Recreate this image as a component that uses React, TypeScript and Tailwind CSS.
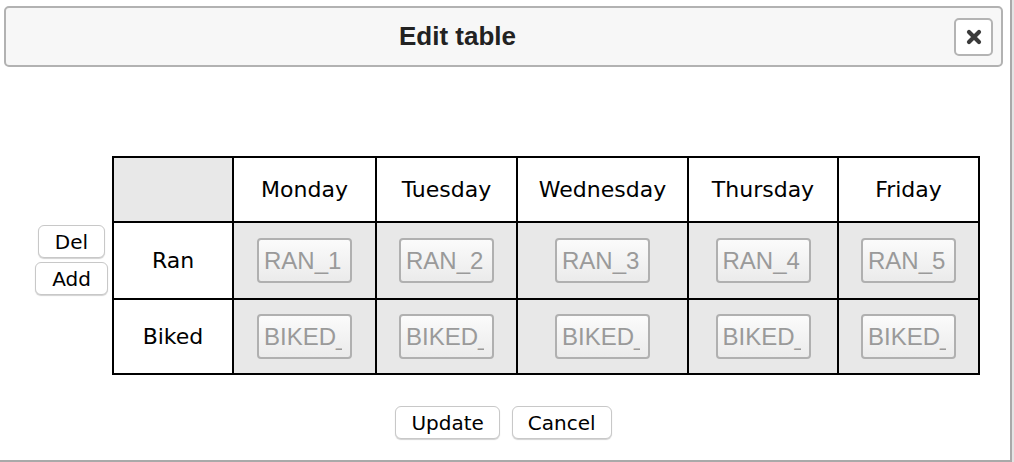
const days = ["Monday", "Tuesday", "Wednesday", "Thursday", "Friday"];
const rows = [
  { label: "Ran", key: "RAN" },
  { label: "Biked", key: "BIKED" },
];

const uiFont = "font-['DejaVu_Sans',sans-serif]";

function SmallButton({ children, className = "" }: { children: React.ReactNode; className?: string }) {
  return (
    <button
      className={`h-[33px] px-[15px] bg-white border border-[#c8c8c8] rounded-[6px] shadow-[0_1px_1px_rgba(0,0,0,0.18)] text-[20px] leading-none text-black ${uiFont} ${className}`}
    >
      {children}
    </button>
  );
}

function CellInput({ value }: { value: string }) {
  return (
    <div className="w-[95px] h-[45px] flex items-center pl-[5px] border-2 border-[#b0b0b0] rounded-[4px] bg-gradient-to-b from-[#fbfbfb] to-[#ebebeb]">
      <span className="w-[78px] overflow-hidden whitespace-nowrap text-[24px] leading-[30px] text-[#9a9a9a] font-['Liberation_Sans',Arial,sans-serif]">
        {value}
      </span>
    </div>
  );
}

export default function App() {
  return (
    <div className="w-[1014px] h-[462px] bg-[#e4e4e4] flex">
      <div className="w-[1012px] h-[462px] bg-white border-r-2 border-b-2 border-[#a9a9a9] flex flex-col">
        {/* title bar */}
        <div className="mt-[6px] ml-[4px] w-[999px] h-[61px] flex items-center border-2 border-[#b2b2b2] rounded-[5px] bg-[#f7f7f7]">
          <h1 className="pl-[393px] text-[26px] font-bold text-[#222] font-['Liberation_Sans',Arial,sans-serif]">
            Edit table
          </h1>
          <button className="ml-auto mr-[8px] w-[39px] h-[38px] flex items-center justify-center border-2 border-[#b4b4b4] rounded-[5px] bg-white">
            <svg width="16" height="16" viewBox="0 0 16 16">
              <path d="M3 3 L13 13 M13 3 L3 13" stroke="#3a3a3a" strokeWidth="4.2" strokeLinecap="round" />
            </svg>
          </button>
        </div>

        {/* table area */}
        <div className="mt-[89px] flex">
          <div className="ml-[31px] w-[81px] flex flex-col items-center gap-[4px] pt-[69px]">
            <SmallButton className="h-[32px] px-[16px] text-[19px]">Del</SmallButton>
            <SmallButton className="h-[32px] px-[16px] text-[19px]">Add</SmallButton>
          </div>

          <div className={`grid grid-cols-[118px_141px_139px_169px_148px_139px] grid-rows-[63px_75px_73px] gap-[2px] p-[2px] bg-black ${uiFont}`}>
            <div className="bg-[#e8e8e8]" />
            {days.map((d) => (
              <div key={d} className="bg-white flex items-center justify-center text-[22px] text-black">
                {d}
              </div>
            ))}
            {rows.map((r) => [
              <div key={r.label} className="bg-white flex items-center justify-center text-[22px] text-black">
                {r.label}
              </div>,
              ...days.map((d, i) => (
                <div key={r.key + d} className="bg-[#e8e8e8] flex items-center justify-center">
                  <CellInput value={`${r.key}_${i + 1}`} />
                </div>
              )),
            ])}
          </div>
        </div>

        {/* footer */}
        <div className="mt-[31px] flex justify-center gap-[12px] pr-[3px]">
          <SmallButton>Update</SmallButton>
          <SmallButton>Cancel</SmallButton>
        </div>
      </div>
    </div>
  );
}
